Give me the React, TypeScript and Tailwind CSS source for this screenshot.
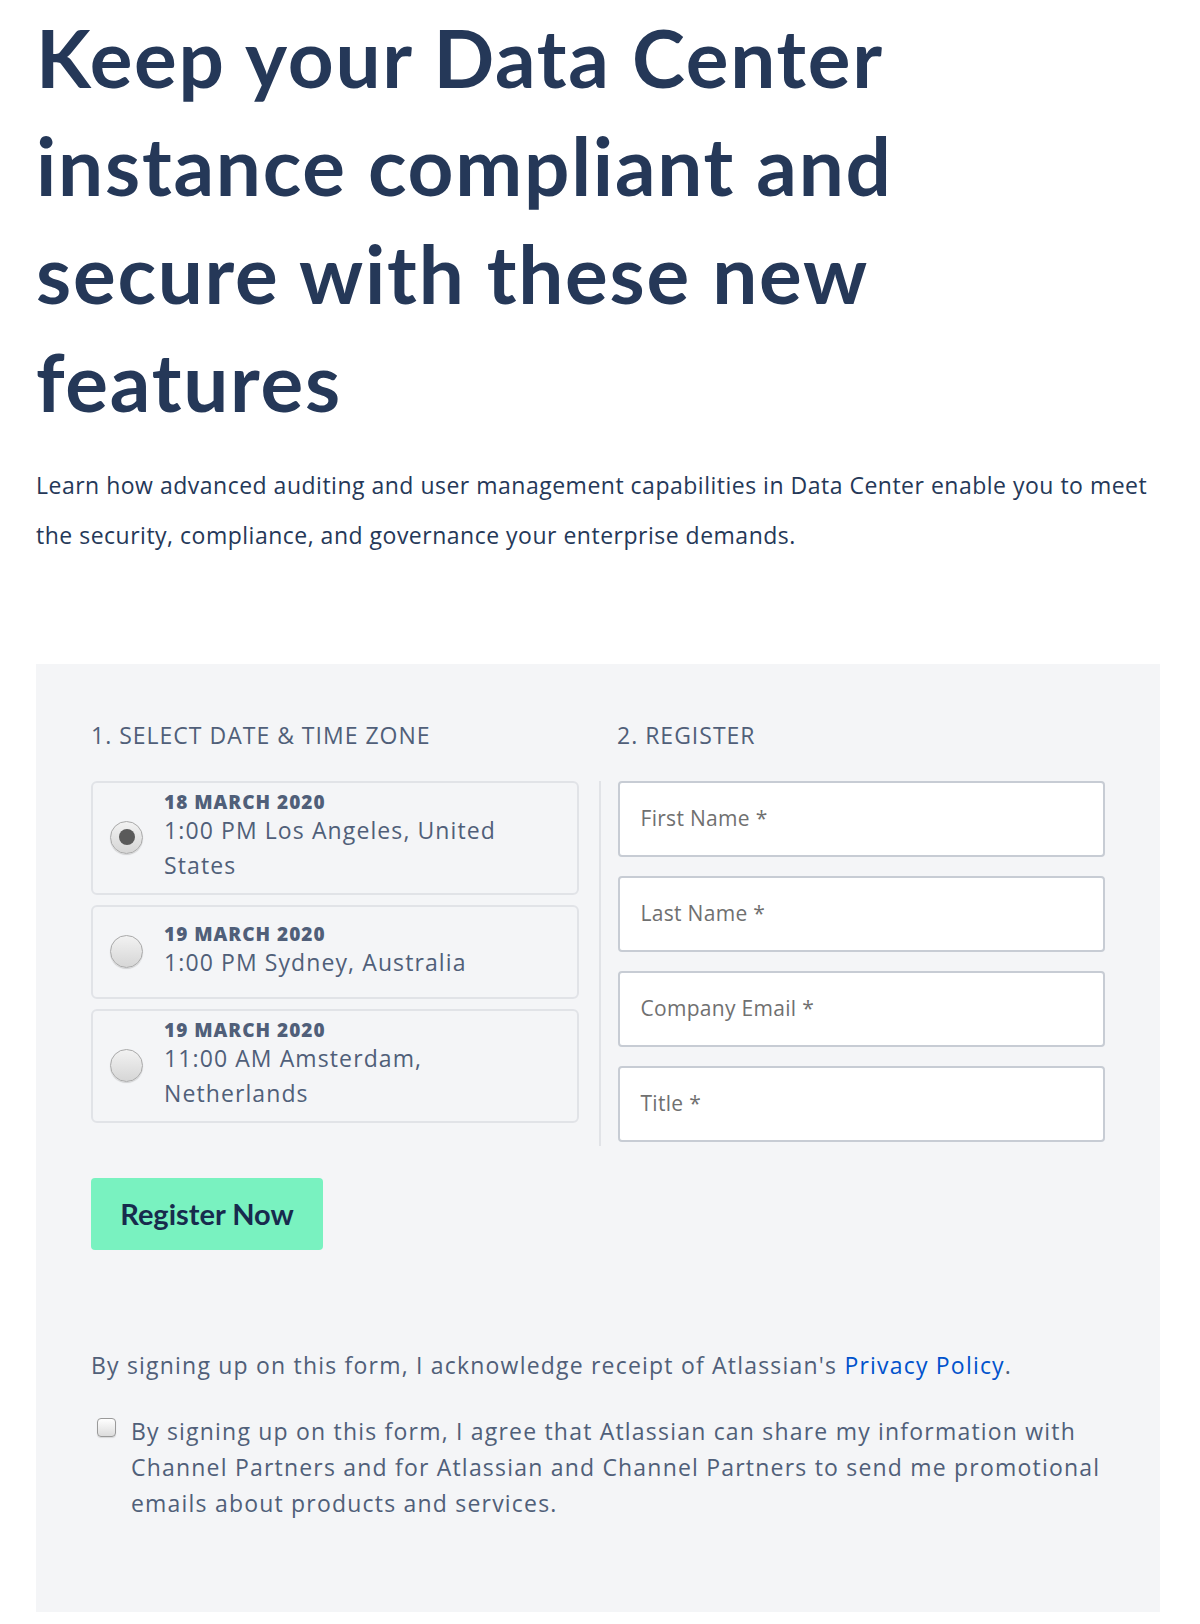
import React from 'react';

const SLOTS = [
  { date: '18 MARCH 2020', time: '1:00 PM Los Angeles, United States', checked: true },
  { date: '19 MARCH 2020', time: '1:00 PM Sydney, Australia', checked: false },
  { date: '19 MARCH 2020', time: '11:00 AM Amsterdam, Netherlands', checked: false },
];

const FIELDS = ['First Name *', 'Last Name *', 'Company Email *', 'Title *'];

function Radio({ checked }: { checked: boolean }) {
  return (
    <span className="flex h-[33px] w-[33px] shrink-0 items-center justify-center rounded-full border border-[#a9a9a9] bg-gradient-to-b from-[#f2f2f2] to-[#d6d6d6] shadow-[0_1px_1px_rgba(0,0,0,0.15)]">
      {checked && <span className="h-[16px] w-[16px] rounded-full bg-[#5a5a5a]" />}
    </span>
  );
}

export default function App() {
  return (
    <div className="min-h-[1624px] bg-white pl-[36px] pr-[40px] pb-[12px] font-['Open_Sans',sans-serif] text-[#253858]">
      <h1 className="max-w-[920px] pt-[3px] font-['Lato',sans-serif] text-[80px] font-bold leading-[108px] tracking-[0.022em] text-[#253858]">
        Keep your Data Center instance compliant and secure with these new features
      </h1>
      <p className="mt-[25px] text-[23px] leading-[50px] tracking-[0.5px] text-[#253858]">
        Learn how advanced auditing and user management capabilities in Data Center enable you to meet the security,
        compliance, and governance your enterprise demands.
      </p>

      <section className="mt-[104px] h-[948px] bg-[#f4f5f7] px-[55px] pt-[56px] text-[#505f79]">
        <div className="flex text-[23px] leading-[30px] tracking-[1px] uppercase">
          <h2 className="w-[488px]">1. Select date &amp; time zone</h2>
          <h2 className="ml-[38px] w-[488px]">2. Register</h2>
        </div>

        <div className="mt-[31px] flex">
          <div className="flex w-[488px] flex-col gap-[10px]">
            {SLOTS.map((s) => (
              <label
                key={s.time}
                className="flex min-h-[94px] items-center gap-[21px] rounded-[6px] border-2 border-[#e1e3e7] pt-[8px] pb-[10px] pl-[17px] pr-[60px]"
              >
                <Radio checked={s.checked} />
                <span className="flex flex-col">
                  <span className="text-[19px] font-extrabold leading-[22px] tracking-[1px] text-[#505f79]">{s.date}</span>
                  <span className="text-[23px] leading-[35px] tracking-[1.1px] text-[#505f79]">{s.time}</span>
                </span>
              </label>
            ))}
          </div>

          <div className="ml-[20px] mr-[17px] w-[2px] bg-[#e1e3e7]" />

          <div className="flex w-[488px] flex-col gap-[19px] pb-[4px]">
            {FIELDS.map((f) => (
              <div
                key={f}
                className="flex h-[76px] items-center rounded-[4px] border-2 border-[#c7ccd4] bg-white px-[21px] text-[21px] tracking-[0.3px] text-[#707070]"
              >
                {f}
              </div>
            ))}
          </div>
        </div>

        <button className="mt-[32px] flex h-[72px] w-[232px] items-center justify-center rounded-[4px] bg-[#79f2c0] font-['Lato',sans-serif] text-[29px] font-bold text-[#172b4d]">
          Register Now
        </button>

        <p className="mt-[100px] text-[23px] leading-[30px] tracking-[1.2px] text-[#505f79]">
          By signing up on this form, I acknowledge receipt of Atlassian's{' '}
          <a className="text-[#0052cc]">Privacy Policy</a>.
        </p>

        <label className="mt-[33px] flex items-start gap-[15px]">
          <span className="mt-[5px] ml-[6px] h-[19px] w-[19px] shrink-0 rounded-[4px] border border-[#9a9a9a] bg-gradient-to-b from-white to-[#dcdcdc] shadow-[0_1px_1px_rgba(0,0,0,0.12)]" />
          <span className="text-[23px] leading-[36px] tracking-[1.2px] text-[#505f79]">
            By signing up on this form, I agree that Atlassian can share my information with Channel Partners and for
            Atlassian and Channel Partners to send me promotional emails about products and services.
          </span>
        </label>
      </section>
    </div>
  );
}
